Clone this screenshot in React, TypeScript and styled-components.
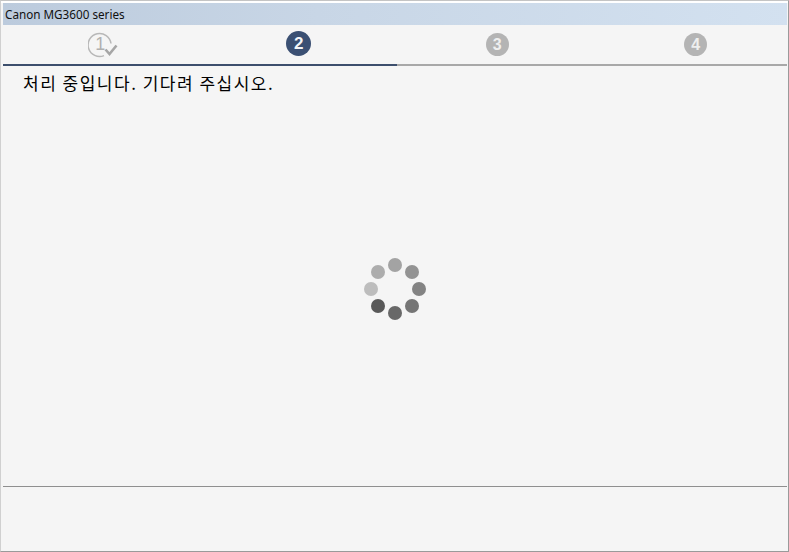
import React from 'react';
import styled, { createGlobalStyle } from 'styled-components';

const GlobalStyle = createGlobalStyle`
  html, body {
    margin: 0;
    padding: 0;
    background: #f5f5f5;
  }
`;

const Window = styled.div`
  box-sizing: border-box;
  width: 789px;
  height: 552px;
  display: flex;
  flex-direction: column;
  overflow: hidden;
  padding: 2px 1px 1px 2px;
  background: #f5f5f5;
  border-top: 1px solid #c4c4c4;
  border-right: 1px solid #9a9a9a;
  border-bottom: 1px solid #9a9a9a;
  border-left: 1px solid #d0d0d0;
  box-shadow: inset 0 2px 0 #ffffff;
`;

const TitleBar = styled.div`
  height: 22px;
  flex: none;
  display: flex;
  align-items: center;
  padding-left: 2px;
  background: linear-gradient(90deg, #bccbdd 0%, #c8d6e6 40%, #d3e1f0 100%);
  font: 11.7px 'Noto Sans', sans-serif;
  color: #111;
`;

const StepRow = styled.div`
  height: 39px;
  flex: none;
  display: grid;
  grid-template-columns: repeat(4, 198.5px);
  margin-left: -2px;
  align-items: end;
  padding-bottom: 8px;
  box-sizing: border-box;
`;

const Step = styled.div`
  display: flex;
  justify-content: center;
  align-items: flex-end;
`;

const StepBadge = styled.div<{ $active?: boolean }>`
  width: ${p => (p.$active ? '25px' : '23px')};
  height: ${p => (p.$active ? '25px' : '23px')};
  border-radius: 50%;
  display: flex;
  align-items: center;
  justify-content: center;
  background: ${p => (p.$active ? '#3b5073' : '#b4b4b4')};
  color: ${p => (p.$active ? '#f4f6f8' : '#efefef')};
  font: bold ${p => (p.$active ? '17px' : '16px')} 'Liberation Sans', sans-serif;
`;

const DoneIcon = styled.div`
  position: relative;
  width: 30px;
  height: 26px;
  margin: 0 0 -2px 6px;
  color: #b0b0b0;
  font: 18px 'Liberation Sans', sans-serif;
`;

const DoneNumber = styled.span`
  position: absolute;
  left: 7px;
  top: 3px;
  line-height: 18px;
`;

const Progress = styled.div`
  height: 2px;
  flex: none;
  display: flex;
  background: #a8a8a8;
`;

const ProgressFill = styled.div`
  height: 100%;
  background: #3d4f6d;
`;

const Message = styled.div`
  flex: none;
  padding: 8px 0 0 20px;
  font: 400 17px/18px 'Noto Sans CJK KR', sans-serif;
  letter-spacing: 1.5px;
  color: #000;
`;

const Content = styled.div`
  flex: 1;
  display: flex;
  align-items: center;
  justify-content: center;
`;

const Footer = styled.div`
  height: 63px;
  flex: none;
  border-top: 1px solid #8f8f8f;
`;

const spinnerDots = [
  { cx: 40, cy: 15, fill: '#a3a3a3' },
  { cx: 57, cy: 22, fill: '#939393' },
  { cx: 64, cy: 39, fill: '#838383' },
  { cx: 57, cy: 56, fill: '#757575' },
  { cx: 40, cy: 63, fill: '#686868' },
  { cx: 23, cy: 56, fill: '#595959' },
  { cx: 16, cy: 39, fill: '#bdbdbd' },
  { cx: 23, cy: 22, fill: '#adadad' },
];

const Spinner: React.FC = () => (
  <svg width="80" height="78" viewBox="0 0 80 78">
    {spinnerDots.map(dot => (
      <circle key={`${dot.cx}-${dot.cy}`} cx={dot.cx} cy={dot.cy} r="7" fill={dot.fill} />
    ))}
  </svg>
);

const App: React.FC = () => {
  return (
    <Window>
      <GlobalStyle />
      <TitleBar>Canon MG3600 series</TitleBar>
      <StepRow>
        <Step>
          <DoneIcon>
            <svg width="30" height="26" viewBox="0 0 30 26" fill="none">
              <path
                d="M16 23.6A11.5 11.5 0 1 1 23 11.5"
                stroke="#b8b8b8"
                strokeWidth="1.5"
              />
              <path d="M17.5 17.5l4 4.5 7-8.5" stroke="#a6a6a6" strokeWidth="2.6" />
            </svg>
            <DoneNumber>1</DoneNumber>
          </DoneIcon>
        </Step>
        <Step>
          <StepBadge $active>2</StepBadge>
        </Step>
        <Step>
          <StepBadge>3</StepBadge>
        </Step>
        <Step>
          <StepBadge>4</StepBadge>
        </Step>
      </StepRow>
      <Progress>
        <ProgressFill style={{ width: `${(394 / 784) * 100}%` }} />
      </Progress>
      <Message>처리 중입니다. 기다려 주십시오.</Message>
      <Content>
        <Spinner />
      </Content>
      <Footer />
    </Window>
  );
};

export default App;
